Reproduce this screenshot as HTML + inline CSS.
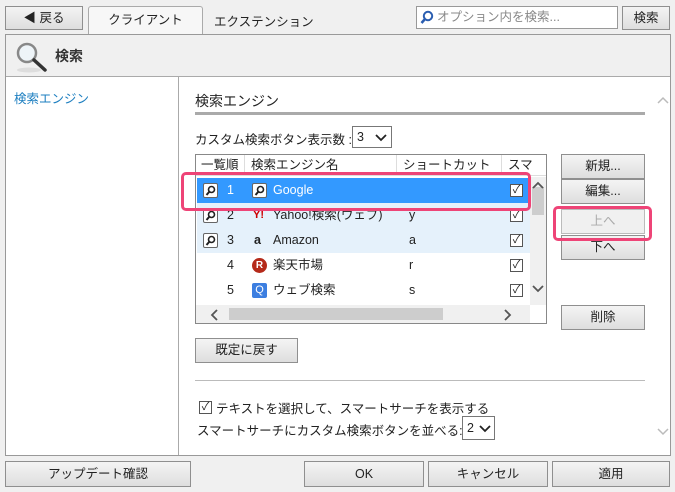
<!DOCTYPE html>
<html><head><meta charset="utf-8"><style>
*{box-sizing:border-box;margin:0;padding:0}
body{width:675px;height:492px;background:#f0f0f0;font-family:"Liberation Sans","Noto Sans CJK JP",sans-serif;font-size:12.5px;color:#222;position:relative;overflow:hidden}
.a{position:absolute}
.btn{position:absolute;border:1px solid #8f8f8f;background:linear-gradient(#f4f4f4,#dedede);text-align:center;font-size:12.5px;color:#222}
.cb{position:absolute;width:13px;height:13px;border:1px solid #555;background:#fff;font-size:11px;line-height:11px;text-align:center;color:#222}
.row{position:absolute;left:1px;width:333px;height:25px;line-height:25px;font-size:12.5px}
.mi{position:absolute;width:15px;height:15px;border:1px solid #666;border-radius:2px;background:#fff;top:5px}
.mi svg{position:absolute;left:1px;top:1px}
</style></head><body>
<div class="btn" style="left:5px;top:6px;width:78px;height:24px;line-height:22px">◀ 戻る</div>
<div class="a" style="left:88px;top:6px;width:115px;height:30px;background:#f7f7f7;border:1px solid #aaa;border-bottom:none;border-radius:3px 3px 0 0;text-align:center;line-height:26px">クライアント</div>
<div class="a" style="left:214px;top:11px">エクステンション</div>
<div class="a" style="left:416px;top:6px;width:202px;height:23px;background:#fff;border:1px solid #999;color:#888;line-height:21px;padding-left:20px">オプション内を検索...</div>
<svg class="a" style="left:420px;top:10px" width="14" height="15"><circle cx="8" cy="6" r="4.2" fill="none" stroke="#2a5db0" stroke-width="2"/><line x1="5" y1="9" x2="1.5" y2="13" stroke="#2a5db0" stroke-width="2.5"/></svg>
<div class="btn" style="left:622px;top:6px;width:48px;height:24px;line-height:22px">検索</div>
<div class="a" style="left:5px;top:34px;width:666px;height:422px;border:1px solid #999;background:#fff"></div>
<div class="a" style="left:6px;top:35px;width:664px;height:42px;background:#f0f0f0;border-bottom:1px solid #aaa"></div>
<svg class="a" style="left:14px;top:40px" width="34" height="34"><ellipse cx="15" cy="30" rx="12" ry="2.5" fill="#ddd"/><circle cx="13" cy="13" r="9" fill="#eef4f8" stroke="#888" stroke-width="2.5"/><line x1="20" y1="20" x2="31" y2="30" stroke="#333" stroke-width="3.5" stroke-linecap="round"/></svg>
<div class="a" style="left:55px;top:46px;font-size:14px;font-weight:bold;color:#333">検索</div>
<div class="a" style="left:178px;top:77px;width:1px;height:378px;background:#aaa"></div>
<div class="a" style="left:14px;top:88px;color:#1e7fc0;font-size:12.5px">検索エンジン</div>
<div class="a" style="left:195px;top:91px;font-size:14px;color:#222">検索エンジン</div>
<div class="a" style="left:195px;top:112px;width:450px;height:3px;background:#aaa"></div>
<svg class="a" style="left:657px;top:96px" width="12" height="8"><path d="M1 7L6 2L11 7" fill="none" stroke="#bbb" stroke-width="1.5"/></svg>
<svg class="a" style="left:657px;top:428px" width="12" height="8"><path d="M1 1L6 6L11 1" fill="none" stroke="#bbb" stroke-width="1.5"/></svg>
<div class="a" style="left:195px;top:129px">カスタム検索ボタン表示数 :</div>
<div class="a" style="left:352px;top:126px;width:40px;height:22px;border:1px solid #777;background:#fff;line-height:20px;padding-left:4px">3<svg class="a" style="left:22px;top:7px" width="12" height="8"><path d="M1 1L6 6L11 1" fill="none" stroke="#222" stroke-width="1.8"/></svg></div>
<div class="a" style="left:195px;top:154px;width:352px;height:170px;border:1px solid #888;background:#fff;overflow:hidden">
 <div class="a" style="left:0;top:0;width:350px;height:21px;line-height:20px;border-bottom:1px solid #ddd;font-size:12.5px">
  <span class="a" style="left:5px">一覧順</span><span class="a" style="left:48px;top:0;width:1px;height:21px;background:#ddd"></span>
  <span class="a" style="left:55px">検索エンジン名</span><span class="a" style="left:200px;top:0;width:1px;height:21px;background:#ddd"></span>
  <span class="a" style="left:207px">ショートカット</span><span class="a" style="left:305px;top:0;width:1px;height:21px;background:#ddd"></span>
  <span class="a" style="left:312px">スマ</span></div>
 <div class="row" style="top:23px;background:#3399ff;color:#fff"><div class="mi" style="left:6px"><svg width="11" height="11"><circle cx="6.5" cy="4.5" r="3" fill="none" stroke="#222" stroke-width="1.6"/><line x1="4.5" y1="6.5" x2="1.5" y2="10" stroke="#222" stroke-width="2"/></svg></div><span class="a" style="left:30px">1</span><div class="mi" style="left:55px"><svg width="11" height="11"><circle cx="6.5" cy="4.5" r="3" fill="none" stroke="#222" stroke-width="1.6"/><line x1="4.5" y1="6.5" x2="1.5" y2="10" stroke="#222" stroke-width="2"/></svg></div><span class="a" style="left:76px">Google</span><div class="cb" style="left:313px;top:6px">✓</div></div>
 <div class="row" style="top:48px;background:#e5f1fb"><div class="mi" style="left:6px"><svg width="11" height="11"><circle cx="6.5" cy="4.5" r="3" fill="none" stroke="#222" stroke-width="1.6"/><line x1="4.5" y1="6.5" x2="1.5" y2="10" stroke="#222" stroke-width="2"/></svg></div><span class="a" style="left:30px">2</span><span class="a" style="left:56px;color:#c00;font-weight:bold;font-size:11px">Y!</span><span class="a" style="left:76px">Yahoo!検索(ウェブ)</span><span class="a" style="left:212px">y</span><div class="cb" style="left:313px;top:6px">✓</div></div>
 <div class="row" style="top:73px;background:#e5f1fb"><div class="mi" style="left:6px"><svg width="11" height="11"><circle cx="6.5" cy="4.5" r="3" fill="none" stroke="#222" stroke-width="1.6"/><line x1="4.5" y1="6.5" x2="1.5" y2="10" stroke="#222" stroke-width="2"/></svg></div><span class="a" style="left:30px">3</span><span class="a" style="left:57px;font-weight:bold">a</span><span class="a" style="left:76px">Amazon</span><span class="a" style="left:212px">a</span><div class="cb" style="left:313px;top:6px">✓</div></div>
 <div class="row" style="top:98px"><span class="a" style="left:30px">4</span><span class="a" style="left:55px;top:5px;width:15px;height:15px;border-radius:50%;background:#b52a1a;color:#fff;font-size:10px;line-height:15px;text-align:center;font-weight:bold">R</span><span class="a" style="left:76px">楽天市場</span><span class="a" style="left:212px">r</span><div class="cb" style="left:313px;top:6px">✓</div></div>
 <div class="row" style="top:123px"><span class="a" style="left:30px">5</span><span class="a" style="left:55px;top:5px;width:15px;height:15px;border-radius:2px;background:#3c7ee0;color:#fff;font-size:11px;line-height:15px;text-align:center">Q</span><span class="a" style="left:76px">ウェブ検索</span><span class="a" style="left:212px">s</span><div class="cb" style="left:313px;top:6px">✓</div></div>
 <div class="a" style="left:334px;top:22px;width:16px;height:128px;background:#f0f0f0"><div class="a" style="left:2px;top:10px;width:12px;height:28px;background:#cdcdcd"></div><svg class="a" style="left:2px;top:4px" width="12" height="8"><path d="M1 7L6 2L11 7" fill="none" stroke="#555" stroke-width="1.8"/></svg><svg class="a" style="left:2px;top:108px" width="12" height="8"><path d="M1 1L6 6L11 1" fill="none" stroke="#555" stroke-width="1.8"/></svg></div>
 <div class="a" style="left:0;top:150px;width:334px;height:18px;background:#f0f0f0"><div class="a" style="left:33px;top:3px;width:214px;height:12px;background:#cdcdcd"></div><svg class="a" style="left:14px;top:4px" width="8" height="12"><path d="M7 1L2 6L7 11" fill="none" stroke="#555" stroke-width="1.8"/></svg><svg class="a" style="left:308px;top:4px" width="8" height="12"><path d="M1 1L6 6L1 11" fill="none" stroke="#555" stroke-width="1.8"/></svg></div>
</div>
<div class="btn" style="left:561px;top:154px;width:84px;height:25px;line-height:23px">新規...</div>
<div class="btn" style="left:561px;top:179px;width:84px;height:25px;line-height:23px">編集...</div>
<div class="btn" style="left:561px;top:209px;width:84px;height:25px;line-height:23px;color:#aaa;background:#f0f0f0;border-color:#bbb">上へ</div>
<div class="btn" style="left:561px;top:235px;width:84px;height:25px;line-height:23px">下へ</div>
<div class="btn" style="left:561px;top:305px;width:84px;height:25px;line-height:23px">削除</div>
<div class="a" style="left:181px;top:172px;width:350px;height:39px;border:3px solid #ee4477;border-radius:5px"></div>
<div class="a" style="left:553px;top:206px;width:99px;height:35px;border:3px solid #ee4477;border-radius:5px"></div>
<div class="btn" style="left:195px;top:338px;width:103px;height:25px;line-height:23px">既定に戻す</div>
<div class="a" style="left:195px;top:380px;width:450px;height:1px;background:#bbb"></div>
<div class="cb" style="left:199px;top:401px">✓</div>
<div class="a" style="left:216px;top:398px">テキストを選択して、スマートサーチを表示する</div>
<div class="a" style="left:197px;top:420px">スマートサーチにカスタム検索ボタンを並べる:</div>
<div class="a" style="left:462px;top:416px;width:33px;height:24px;border:1px solid #777;background:#fff;line-height:22px;padding-left:4px">2<svg class="a" style="left:16px;top:8px" width="12" height="8"><path d="M1 1L6 6L11 1" fill="none" stroke="#222" stroke-width="1.8"/></svg></div>
<div class="btn" style="left:5px;top:461px;width:186px;height:26px;line-height:24px">アップデート確認</div>
<div class="btn" style="left:304px;top:461px;width:120px;height:26px;line-height:24px">OK</div>
<div class="btn" style="left:428px;top:461px;width:120px;height:26px;line-height:24px">キャンセル</div>
<div class="btn" style="left:552px;top:461px;width:118px;height:26px;line-height:24px">適用</div>
</body></html>
